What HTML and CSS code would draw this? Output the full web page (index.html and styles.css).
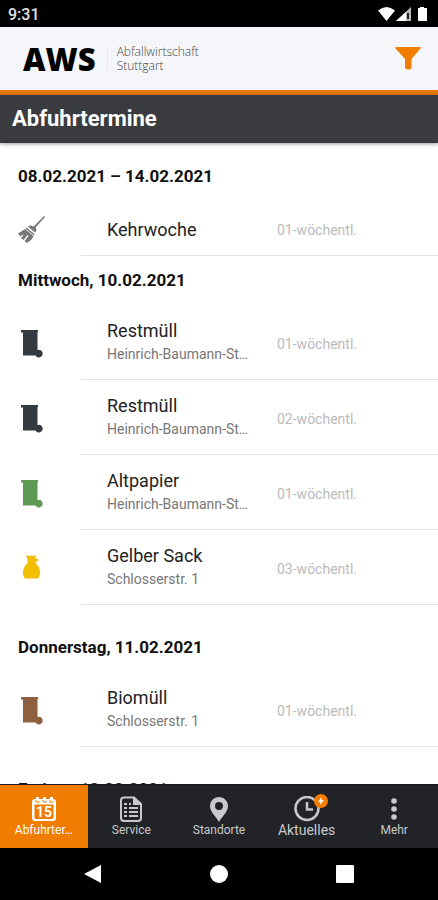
FILE: index.html
```html
<!DOCTYPE html>
<html lang="de">
<head>
<meta charset="utf-8">
<meta name="viewport" content="width=device-width, initial-scale=1">
<title>Abfuhrtermine</title>
<link rel="stylesheet" href="styles.css">
</head>
<body>
<svg class="defs" aria-hidden="true">
  <symbol id="bin" viewBox="0 0 28 28"><path d="M3 0h17v2h-.5v18a3.800 3.800 0 1 1-2 5.500H5V2.500H3z"/></symbol>
</svg>
<div class="status">
  <span>9:31</span>
  <svg class="status-icons" viewBox="0 0 52 16" aria-hidden="true">
    <path fill="#fff" d="M0 4.500Q8.500-2.500 17 4.500L8.500 15z"/>
    <path fill="#bbb" d="M18 15L33 1v14z"/>
    <path fill="#fff" d="M18 15L28 6v9z"/>
    <path fill="#222" d="M29 7h2v6h-2z"/>
    <path fill="#fff" d="M42 1h4v1h3v13h-9V2h2z"/>
  </svg>
</div>
<header class="brand">
  <span class="logo">AWS</span>
  <span class="claim">Abfallwirtschaft<br>Stuttgart</span>
  <button class="filter" type="button" aria-label="Filter">
    <svg viewBox="0 0 26 23" aria-hidden="true"><path d="M1 0h24q1 0 .5 1.500L16.500 12v9l-1.500 1.500h-3L10 21v-9L.5 1.500Q0 0 1 0z"/></svg>
  </button>
</header>
<h1 class="title">Abfuhrtermine</h1>
<main class="list">
  <section class="group compact">
    <h2>08.02.2021 – 14.02.2021</h2>
    <div class="row single">
      <svg class="icon gray" viewBox="0 0 28 28" aria-hidden="true"><path d="M26 0l1 1-9.500 10.500q2 3-.5 5l-7-6q2-2 5.500 0zM8.500 11.500l8 6.500-.5 1.500-8.500-7zM7 13l8.500 7-2 3.500L9 27l-2.500-2 4-5-1-1-4 5-2.500-2 2.500-3-1-.5-2 2L0 17.500z"/></svg>
      <div class="what"><h3>Kehrwoche</h3></div>
      <span class="freq">01-wöchentl.</span>
    </div>
  </section>
  <section class="group">
    <h2>Mittwoch, 10.02.2021</h2>
    <div class="row">
      <svg class="icon black" aria-hidden="true"><use href="#bin"/></svg>
      <div class="what"><h3>Restmüll</h3><p>Heinrich-Baumann-St…</p></div>
      <span class="freq">01-wöchentl.</span>
    </div>
    <div class="row">
      <svg class="icon black" aria-hidden="true"><use href="#bin"/></svg>
      <div class="what"><h3>Restmüll</h3><p>Heinrich-Baumann-St…</p></div>
      <span class="freq">02-wöchentl.</span>
    </div>
    <div class="row">
      <svg class="icon green" aria-hidden="true"><use href="#bin"/></svg>
      <div class="what"><h3>Altpapier</h3><p>Heinrich-Baumann-St…</p></div>
      <span class="freq">01-wöchentl.</span>
    </div>
    <div class="row">
      <svg class="icon yellow" viewBox="0 0 28 28" aria-hidden="true"><path d="M8 0l3 1 2-.5 2 .5 3-1-.5 3.500L20 4l.5 2-3 .5V8Q22 12 22 18q0 5.500-3.500 5.500h-10Q5 23.500 5 18q0-6 4.500-10V4z"/></svg>
      <div class="what"><h3>Gelber Sack</h3><p>Schlosserstr. 1</p></div>
      <span class="freq">03-wöchentl.</span>
    </div>
  </section>
  <section class="group">
    <h2>Donnerstag, 11.02.2021</h2>
    <div class="row">
      <svg class="icon brown" aria-hidden="true"><use href="#bin"/></svg>
      <div class="what"><h3>Biomüll</h3><p>Schlosserstr. 1</p></div>
      <span class="freq">01-wöchentl.</span>
    </div>
  </section>
  <section class="group">
    <h2>Freitag, 12.02.2021</h2>
  </section>
</main>
<nav class="tabs">
  <a href="#termine" class="active" aria-current="page">
    <svg viewBox="0 0 26 26" aria-hidden="true"><path fill="currentColor" fill-rule="evenodd" d="M4 3h1V1h3v2h4V1h3v2h4V1h3v2q3 0 3 3v16q0 3-3 3H4q-3 0-3-3V6q0-3 3-3zM3.500 8.500v13q0 1.500 1.500 1.500h16q1.500 0 1.500-1.500v-13z"/><path class="mark" d="M5 4v1q0 1.500 1.500 1.500T8 5M12 4v1q0 1.500 1.500 1.500T15 5M19 4v1q0 1.500 1.500 1.500T22 5"/><text x="13" y="21">15</text></svg>
    <span>Abfuhrter…</span>
  </a>
  <a href="#service">
    <svg viewBox="0 0 26 26" aria-hidden="true"><path class="line" d="M6 1.500h10l7 6.500v14q0 3-3 3H6q-3 0-3-3V4.500q0-3 3-3z"/><path fill="currentColor" d="M15 1l9 8h-9z"/><path class="line" d="M6 12h3m2 0h9M6 16h3m2 0h9M6 20h3m2 0h9M6 8h3m2 0h2"/></svg>
    <span>Service</span>
  </a>
  <a href="#standorte">
    <svg viewBox="0 0 26 26" aria-hidden="true"><path fill="currentColor" fill-rule="evenodd" d="M13 1c5 0 9 4 9 9 0 6-5 9-9 16C9 19 4 16 4 10c0-5 4-9 9-9zm0 5a4 4 0 1 0 0 8 4 4 0 0 0 0-8z"/></svg>
    <span>Standorte</span>
  </a>
  <a href="#aktuelles" class="large">
    <svg viewBox="0 0 26 26" aria-hidden="true"><circle class="ring" cx="13" cy="12.500" r="11.500"/><path class="ring" d="M13 6v7.500h6"/></svg>
    <svg class="badge" viewBox="0 0 14 14" aria-hidden="true"><circle cx="7" cy="7" r="7" fill="#f57c00"/><path fill="#fff" d="M7.500 3L4 8h2.500L6 11l4-5H7.500z"/></svg>
    <span>Aktuelles</span>
  </a>
  <a href="#mehr">
    <svg viewBox="0 0 26 26" aria-hidden="true"><g fill="currentColor"><circle cx="13" cy="5" r="2.800"/><circle cx="13" cy="13" r="2.800"/><circle cx="13" cy="21" r="2.800"/></g></svg>
    <span>Mehr</span>
  </a>
</nav>
<div class="system">
  <button type="button" aria-label="Zurück"><svg viewBox="0 0 18 18" aria-hidden="true"><path d="M17 0v18L0 9z"/></svg></button>
  <button type="button" aria-label="Startseite"><svg viewBox="0 0 18 18" aria-hidden="true"><circle cx="9" cy="9" r="9"/></svg></button>
  <button type="button" aria-label="Übersicht"><svg viewBox="0 0 18 18" aria-hidden="true"><rect width="18" height="18" rx="1"/></svg></button>
</div>
</body>
</html>
```
FILE: styles.css
```css
* { box-sizing: border-box; }
body {
  margin: 0;
  height: 100vh;
  display: flex;
  flex-direction: column;
  background: #fff;
  color: #111;
  font-family: Roboto, "Liberation Sans", sans-serif;
}
h1, h2, h3, p { margin: 0; }
button { border: 0; padding: 0; background: none; }
.defs { display: none; }

.status {
  flex: none;
  display: flex;
  align-items: center;
  justify-content: space-between;
  height: 27px;
  padding: 1px 8px 0;
  background: #000;
  color: #e0e0e0;
  font-size: 16px;
  font-weight: 500;
}
.status-icons { width: 52px; height: 16px; }

.brand {
  flex: none;
  display: flex;
  align-items: center;
  height: 68px;
  padding: 0 17px 0 23px;
  background: #f4f6fa;
  border-bottom: 5px solid #e87807;
}
.logo {
  padding-right: 11px;
  border-right: 1px solid #e6e8ec;
  color: #000;
  font: 800 31px/22px "Open Sans", "Noto Sans", sans-serif;
}
.claim {
  padding-left: 9px;
  color: #444;
  font: 300 12px/14px "Open Sans", "Noto Sans", sans-serif;
}
.filter { margin-left: auto; }
.filter svg { display: block; width: 26px; height: 23px; fill: #f07d00; }

.title {
  flex: none;
  z-index: 1;
  padding: 0 12px;
  background: #3a3b3f;
  box-shadow: 0 1px 4px rgba(0, 0, 0, .4);
  color: #fff;
  font-size: 22px;
  line-height: 48px;
}

.list {
  flex: 1;
  min-height: 0;
  padding-top: 9px;
  overflow: hidden auto;
  scrollbar-width: none;
}
.group { padding-bottom: 18px; }
.compact { padding-bottom: 0; }
h2 { padding-left: 18px; font-size: 17px; line-height: 49px; }
.row {
  display: grid;
  grid-template-columns: 89px 170px 1fr;
  align-items: center;
  height: 75px;
  padding: 2px 0 0 18px;
  background: linear-gradient(#e0e0e0, #e0e0e0) 81px 100% / 100% 1px no-repeat;
}
.single { height: 55px; }
.icon { width: 28px; height: 28px; }
.gray { fill: #777; }
.black { fill: #343a40; }
.green { fill: #5f9a55; }
.yellow { fill: #f3bd00; }
.brown { fill: #8d6040; }
.what { padding-bottom: 3px; }
.single .what { padding-bottom: 0; }
h3 { color: #222; font-size: 18px; font-weight: 400; line-height: 24px; }
p { color: #777; font-size: 14px; line-height: 22px; }
.freq { color: #bbb; font-size: 14px; }

.tabs {
  flex: none;
  display: grid;
  grid-template-columns: repeat(5, 1fr);
  height: 64px;
  border-top: 1px solid #1a1b1d;
  background: #212327;
}
.tabs a {
  position: relative;
  display: flex;
  flex-direction: column;
  align-items: center;
  padding-top: 11px;
  color: #c8c9cb;
  font-size: 12px;
  line-height: 16px;
  text-decoration: none;
}
.tabs a.active { background: #f07d00; color: #fff; }
.tabs a.large { font-size: 14px; }
.tabs svg { width: 26px; height: 26px; }
.tabs .badge { position: absolute; top: 9px; left: calc(50% + 7px); width: 14px; height: 14px; }
.tabs text { fill: #fff; font-size: 14px; font-weight: 700; text-anchor: middle; }
.mark, .line, .ring { fill: none; stroke: currentColor; stroke-width: 2; }
.mark { stroke: #f07d00; stroke-width: 1; }
.ring { stroke-width: 2.5; }

.system {
  flex: none;
  display: grid;
  grid-template-columns: repeat(3, 126px);
  justify-content: center;
  height: 52px;
  background: #000;
}
.system button { display: grid; place-items: center; }
.system svg { width: 18px; height: 18px; fill: #fff; }
```
